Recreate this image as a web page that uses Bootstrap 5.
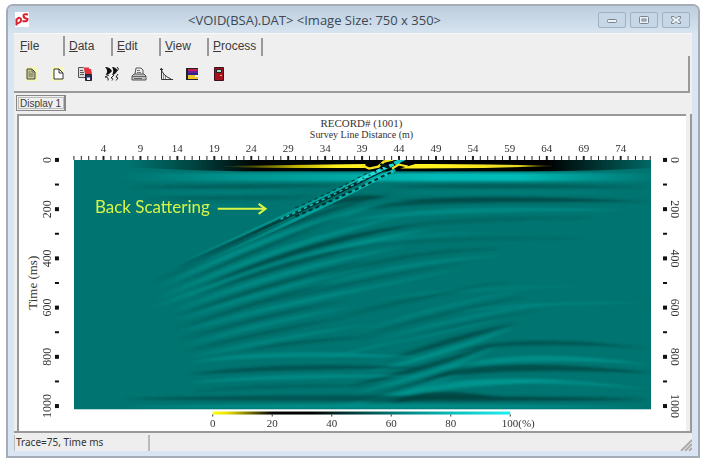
<!DOCTYPE html>
<html lang="en">
<head>
    <meta charset="UTF-8">
    <meta name="viewport" content="width=device-width, initial-scale=1">
    <title>VOID(BSA).DAT</title>
    <link href="https://cdn.jsdelivr.net/npm/bootstrap@5.3.2/dist/css/bootstrap.min.css" rel="stylesheet">
    <style>
        body {
            background-color: #fff;
            color: #333;
            font-family: "Liberation Sans", Arial, sans-serif;
            font-size: 12px;
            line-height: 16px;
            padding: 4px 5px 8px 6px;
        }
        button {
            color: #3a3a3a;
        }
        .app-window {
            background-color: #d9e5f2;
            border: 2px solid #a4acb5;
            border-radius: 7px 7px 0 0;
            padding: 0 6px 5px;
        }
        .title-bar {
            background: linear-gradient(#bccddd, #d7e4f0);
            height: 27px;
            margin: 0 -6px;
            padding: 0 8px 0 7px;
            border-radius: 5px 5px 0 0;
        }
        .title-bar h1 {
            font: 13px/18px "Open Sans", "Noto Sans", sans-serif;
            color: #3d4853;
        }
        .win-btn {
            width: 28px;
            height: 16px;
            border: 1px solid #9eb0c3;
            border-radius: 2px;
            background-color: #c8d7e6;
        }
        .app-body {
            background-color: #efefef;
            border-top: 1px solid #f8f8f8;
        }
        .menu-tabs {
            padding-top: 2px;
        }
        .menu-tab {
            min-width: 48px;
            height: 18px;
            padding: 0 5px 2px 4px;
            border-right: 2px solid #999;
            text-align: left;
        }
        .menu-tab.active {
            min-width: 51px;
            height: 20px;
            padding: 2px 5px 2px 6px;
        }
        .tool-bar {
            height: 37px;
            margin-right: 2px;
            padding-left: 3px;
            border-right: 2px solid #999;
            border-bottom: 2px solid #999;
        }
        .tool-btn {
            width: 27px;
            height: 24px;
        }
        .display-tabs {
            padding: 2px 2px 3px;
        }
        .display-tab {
            border: 1px solid #888;
            border-right-width: 2px;
            outline: 1px solid #bbb;
            outline-offset: -3px;
            padding: 0 3px;
            height: 16px;
            font-size: 10px;
            line-height: 13px;
        }
        .chart-frame {
            border: solid #999;
            border-width: 0 2px 2px 0;
            padding: 0 4px 0 3px;
        }
        .chart-panel {
            background-color: #fff;
            border: solid #999;
            border-width: 2px 0 0 2px;
        }
        .chart-panel text {
            font-family: "Liberation Serif", "Times New Roman", serif;
            fill: #333;
            text-anchor: middle;
        }
        .chart-panel .note {
            font: 17px Lato, "Open Sans", sans-serif;
            fill: #d8f545;
            text-anchor: start;
        }
        .status-bar {
            height: 18px;
            padding-top: 2px;
            background-color: #eee;
            font-family: "Noto Sans", sans-serif;
            font-size: 10px;
        }
        .status-cell {
            width: 136px;
            line-height: 14px;
            padding-left: 1px;
            border: solid #bbb;
            border-width: 0 2px 0 1px;
        }
    </style>
</head>
<body>
<div class="app-window">
    <header class="title-bar d-flex align-items-center justify-content-between">
        <svg width="16" height="16" viewBox="0 0 16 16" role="img" aria-label="pS">
            <rect width="14" height="15" fill="#fff"/>
            <path d="M1.500 13.500V6.500M2 7Q5.500 4.500 6 7.500T2 11.500" fill="none" stroke="#d9202c" stroke-width="2"/>
            <path d="M13 2.500Q8 1.500 8.500 4T12.500 7Q13 10 7.500 9" fill="none" stroke="#d9202c" stroke-width="2"/>
        </svg>
        <h1 class="m-0 text-nowrap">&lt;VOID(BSA).DAT&gt; &lt;Image Size: 750 x 350&gt;</h1>
        <div class="d-flex gap-1">
            <button type="button" class="win-btn p-0 d-flex align-items-center justify-content-center" aria-label="Minimize">
                <svg width="12" height="12" viewBox="0 0 12 12"><rect x="1.500" y="5.500" width="9" height="3" rx="1" fill="#eef3f8" stroke="#77838f"/></svg>
            </button>
            <button type="button" class="win-btn p-0 d-flex align-items-center justify-content-center" aria-label="Maximize">
                <svg width="12" height="12" viewBox="0 0 12 12"><rect x="1.500" y="2.500" width="9" height="7" rx="1" fill="#eef3f8" stroke="#77838f"/><rect x="4" y="5" width="4" height="2" fill="#c8d7e6" stroke="#77838f"/></svg>
            </button>
            <button type="button" class="win-btn p-0 d-flex align-items-center justify-content-center" aria-label="Close">
                <svg width="12" height="12" viewBox="0 0 12 12"><path d="M1.500 2.500H4L6 4.500 8 2.500h2.500v1.500L8.500 6l2 2v1.500H8L6 7.500 4 9.500H1.500V8l2-2-2-2z" fill="#eef3f8" stroke="#77838f"/></svg>
            </button>
        </div>
    </header>

    <main class="app-body">
        <nav class="menu-tabs d-flex align-items-end">
            <button type="button" class="menu-tab active border-top-0 border-bottom-0 border-start-0 bg-transparent"><u>F</u>ile</button>
            <button type="button" class="menu-tab border-top-0 border-bottom-0 border-start-0 bg-transparent"><u>D</u>ata</button>
            <button type="button" class="menu-tab border-top-0 border-bottom-0 border-start-0 bg-transparent"><u>E</u>dit</button>
            <button type="button" class="menu-tab border-top-0 border-bottom-0 border-start-0 bg-transparent"><u>V</u>iew</button>
            <button type="button" class="menu-tab border-top-0 border-bottom-0 border-start-0 bg-transparent"><u>P</u>rocess</button>
        </nav>

        <div class="tool-bar d-flex align-items-center">
            <button type="button" class="tool-btn p-0 border-0 bg-transparent" aria-label="Open">
                <svg width="16" height="16" viewBox="0 0 16 16"><path d="M2 1h12v14H2z" fill="#f4f6b4"/><path d="M4 3h5l3 3v7H4z" fill="#c9cb93" stroke="#444"/><path d="M9 3v3h3M5.500 6h2M5.500 8h5M5.500 10h5" fill="none" stroke="#666"/></svg>
            </button>
            <button type="button" class="tool-btn p-0 border-0 bg-transparent" aria-label="New">
                <svg width="16" height="16" viewBox="0 0 16 16"><path d="M2 1h12v14H2z" fill="#f8f9b6"/><path d="M4 3h5l4 4v6H4z" fill="#fff" stroke="#333"/><path d="M9 3v4h4" fill="none" stroke="#333"/></svg>
            </button>
            <button type="button" class="tool-btn p-0 border-0 bg-transparent" aria-label="Save as">
                <svg width="16" height="16" viewBox="0 0 16 16"><path d="M1.500 1.500h5l2 2v8h-7z" fill="#ddd" stroke="#555"/><path d="M3 4.500h3M3 6.500h4M3 8.500h4" stroke="#555"/><path d="M7 1.500h5V3h2l1 5H9L7.500 6z" fill="#e2313b"/><path d="M8.500 8.500h6v6h-6z" fill="#303060" stroke="#222"/><path d="M10 11.500h3V14h-3z" fill="#eee"/></svg>
            </button>
            <button type="button" class="tool-btn p-0 border-0 bg-transparent" aria-label="Wiggle traces">
                <svg width="16" height="16" viewBox="0 0 16 16"><path d="M1 1q5 0 7 4Q5 9 1.500 9 5 5 1 1zM8 1q4 0 5.500 3.500Q11 9 8 9 10.500 5 8 1z" fill="#111"/><path d="M13 1l1.500 2-1.500 2M5 9l-4 2q4 0 3 3.500M10 9l-3 3q3 0 1 2.500M14 8l-2 3 2 1-2 2.500" fill="none" stroke="#222"/></svg>
            </button>
            <button type="button" class="tool-btn p-0 border-0 bg-transparent" aria-label="Print">
                <svg width="16" height="16" viewBox="0 0 16 16"><path d="M4 8l1-6h5l2 2v4" fill="#eee" stroke="#555"/><path d="M6 4.500h3M6 6.500h4" stroke="#777"/><path d="M3 8h10l2 2v4H1v-4z" fill="#c4c4c4" stroke="#555"/><path d="M1 10.500h14M3 12.500h8" stroke="#666"/></svg>
            </button>
            <button type="button" class="tool-btn p-0 border-0 bg-transparent" aria-label="Spectrum">
                <svg width="16" height="16" viewBox="0 0 16 16"><path d="M3.500 2v11.500H15M2 3.500h3M3 2q1 7 10 11" fill="none" stroke="#333"/><path d="M5.500 8v5M7.500 10v3" stroke="#888"/></svg>
            </button>
            <button type="button" class="tool-btn p-0 border-0 bg-transparent" aria-label="Color scale">
                <svg width="16" height="16" viewBox="0 0 16 16"><path d="M1 2h12v12H1z" fill="#222"/><path d="M3 3h10v2H3z" fill="#c51d4c"/><path d="M3 5h10v2H3z" fill="#6a1a9c"/><path d="M3 7h10v2H3z" fill="#25258c"/><path d="M3 9h7v2H3z" fill="#f0c52c"/><path d="M10 9h3v2h-3z" fill="#eee"/><path d="M3 11h10v2H3z" fill="#f0c52c"/></svg>
            </button>
            <button type="button" class="tool-btn p-0 border-0 bg-transparent" aria-label="Exit">
                <svg width="16" height="16" viewBox="0 0 16 16"><path d="M2.500 1.500h9v13h-9z" fill="#a80f22" stroke="#40101a"/><path d="M4.500 3.500h5v3h-5z" fill="#a5dcd5" stroke="#222"/><path d="M8 9h2v1H8z" fill="#e8c040"/></svg>
            </button>
        </div>

        <div class="display-tabs">
            <button type="button" class="display-tab d-block bg-transparent">Display 1</button>
        </div>

        <div class="chart-frame">
            <div class="chart-panel">
                <svg class="d-block w-100" viewBox="0 0 668 315" role="img" aria-label="Record 1001, time against survey line distance">
                    <defs>
                        <linearGradient id="scaleFill">
                            <stop offset="0" stop-color="#ffff10"/>
                            <stop offset=".05" stop-color="#e8e000"/>
                            <stop offset=".2" stop-color="#000"/>
                            <stop offset=".33" stop-color="#000"/>
                            <stop offset=".6" stop-color="#007470"/>
                            <stop offset=".8" stop-color="#08bcb8"/>
                            <stop offset="1" stop-color="#20f0f0"/>
                        </linearGradient>
                        <linearGradient id="blackBand">
                            <stop offset="0" stop-opacity="0"/>
                            <stop offset=".12" stop-opacity=".4"/>
                            <stop offset=".24" stop-opacity=".95"/>
                            <stop offset=".8" stop-opacity="1"/>
                            <stop offset="1" stop-opacity=".1"/>
                        </linearGradient>
                        <linearGradient id="yellowLeft">
                            <stop offset="0" stop-color="#e8d800" stop-opacity="0"/>
                            <stop offset=".5" stop-color="#e8d800" stop-opacity=".8"/>
                            <stop offset=".8" stop-color="#fff020"/>
                        </linearGradient>
                        <linearGradient id="yellowRight">
                            <stop offset=".3" stop-color="#fff020"/>
                            <stop offset=".75" stop-color="#e8d820"/>
                            <stop offset="1" stop-color="#e8d800" stop-opacity="0"/>
                        </linearGradient>
                        <linearGradient id="cyanBand">
                            <stop offset="0" stop-color="#00b0ab" stop-opacity="0"/>
                            <stop offset=".25" stop-color="#00b0ab" stop-opacity=".6"/>
                            <stop offset=".6" stop-color="#00bcb8"/>
                            <stop offset=".75" stop-color="#00bcb8"/>
                            <stop offset="1" stop-color="#00b0ab" stop-opacity=".1"/>
                        </linearGradient>
                        <linearGradient id="rayDark" gradientUnits="userSpaceOnUse" x1="280" y1="0" x2="860" y2="0">
                            <stop offset="0" stop-color="#002a29" stop-opacity="0"/>
                            <stop offset=".4" stop-color="#002a29" stop-opacity=".6"/>
                            <stop offset="1" stop-color="#001a19"/>
                        </linearGradient>
                        <linearGradient id="rayLight" gradientUnits="userSpaceOnUse" x1="280" y1="0" x2="880" y2="0">
                            <stop offset="0" stop-color="#00a8a2" stop-opacity="0"/>
                            <stop offset=".5" stop-color="#00a8a2" stop-opacity=".7"/>
                            <stop offset="1" stop-color="#10ccc8"/>
                        </linearGradient>
                        <filter id="soft" filterUnits="userSpaceOnUse" x="0" y="0" width="1564" height="750"><feGaussianBlur stdDeviation="10 3"/></filter>
                        <filter id="thin" filterUnits="userSpaceOnUse" x="0" y="0" width="1564" height="750"><feGaussianBlur stdDeviation="2"/></filter>
                    </defs>

                    <text x="343" y="11" font-size="11">RECORD# (1001)</text>
                    <text x="343" y="22" font-size="10">Survey Line Distance (m)</text>
                    <text transform="translate(18 167) rotate(-90)" font-size="13">Time (ms)</text>

                    <svg x="55" y="44" width="578" height="250" viewBox="0 0 1564 750" preserveAspectRatio="none">
                        <rect width="1564" height="750" fill="#007470"/>
                        <g filter="url(#soft)">
                            <rect x="120" y="38" width="1444" height="26" fill="url(#cyanBand)"/>
                            <g id="streaks"></g>
                        </g>
                        <g filter="url(#thin)" fill="none">
                            <path d="M150 0H1564V24Q1400 34 1200 34H450Q300 32 150 22z" fill="url(#blackBand)"/>
                            <path d="M400 18L790 12V24Q600 26 400 21z" fill="url(#yellowLeft)"/>
                            <path d="M885 26L925 12Q1100 11 1310 18Q1100 27 885 26z" fill="url(#yellowRight)"/>
                            <path d="M780 16L800 26 825 20 840 5 866 -2" stroke="#f6e420" stroke-width="7"/>
                            <path d="M290 308Q560 175 800 44" stroke="url(#rayLight)" stroke-width="7"/>
                            <path d="M280 322Q560 187 850 24" stroke="url(#rayDark)" stroke-width="9"/>
                            <path d="M280 336Q580 200 870 30" stroke="url(#rayLight)" stroke-width="9"/>
                            <path d="M560 178Q700 108 850 22" stroke="#18b5b0" stroke-width="5" stroke-dasharray="9 9"/>
                            <path d="M600 170Q740 104 868 32" stroke="#002f2d" stroke-width="6" stroke-dasharray="11 9"/>
                            <path d="M600 144Q720 86 800 36" stroke="#004744" stroke-width="4" stroke-dasharray="10 9"/>
                            <path d="M770 62L835 28 885 4" stroke="#25dcd8" stroke-width="10" stroke-dasharray="13 6"/>
                            <path d="M830 12l24 12M856 10l22 -8" stroke="#021a1a" stroke-width="7"/>
                            <path d="M862 26L880 14 905 20" stroke="#f6e420" stroke-width="6"/>
                            <path d="M868 10L895 -3" stroke="#10c8c6" stroke-width="10"/>
                        </g>
                    </svg>
                    <text class="note" x="76" y="97">Back Scattering</text>
                    <path d="M199 93H246M240 88L247 93 240 98" fill="none" stroke="#d8f545" stroke-width="2"/>

                    <g id="distanceAxis"></g>
                    <g id="timeAxis"></g>

                    <rect x="194" y="296" width="298" height="3" fill="url(#scaleFill)"/>
                    <g id="scaleAxis"></g>
                </svg>
            </div>
        </div>

        <footer class="status-bar d-flex justify-content-between">
            <div class="status-cell text-nowrap">Trace=75, Time ms</div>
            <svg class="align-self-end" width="12" height="12" viewBox="0 0 12 12"><path d="M1 12L12 1M5 12L12 5M9 12L12 9" stroke="#aaa" stroke-width="2"/></svg>
        </footer>
    </main>
</div>
<script src="https://cdn.jsdelivr.net/npm/bootstrap@5.3.2/dist/js/bootstrap.bundle.min.js"></script>
<script>
    const plot = { left: 55, right: 633, top: 44 };

    // wavefronts: x1, y1, bend x, bend y, x2, y2, thickness, strength (negative is dark)
    const wavefronts = [
        [150, 82, 500, 80, 740, 76, 16, -.5], [860, 80, 1100, 76, 1564, 82, 18, -.5],
        [180, 98, 400, 97, 660, 94, 12, .3], [200, 115, 450, 114, 650, 112, 14, -.4],
        [860, 100, 1100, 94, 1500, 100, 14, .3], [780, 150, 950, 104, 1564, 126, 26, -.75],
        [880, 122, 1000, 116, 1500, 122, 14, -.6], [740, 185, 950, 140, 1500, 152, 22, .6],
        [200, 140, 400, 139, 560, 130, 10, .25], [780, 225, 950, 170, 1400, 176, 14, -.35],
        [220, 370, 560, 180, 860, 100, 20, -.75], [650, 145, 740, 108, 850, 112, 24, -.95],
        [220, 388, 560, 208, 840, 130, 22, .85], [280, 375, 560, 235, 740, 160, 18, -.7],
        [210, 425, 560, 250, 900, 165, 22, .75], [310, 402, 600, 248, 920, 196, 24, -.95],
        [200, 450, 600, 275, 980, 205, 24, .85], [320, 412, 560, 302, 860, 242, 22, -.85],
        [260, 460, 560, 325, 900, 260, 20, .7], [280, 470, 520, 372, 800, 300, 16, -.65],
        [270, 485, 520, 392, 800, 320, 18, .6], [280, 510, 480, 428, 700, 370, 14, -.6],
        [280, 520, 500, 448, 800, 380, 16, .6], [290, 540, 500, 470, 740, 420, 14, -.5],
        [290, 562, 500, 490, 760, 440, 16, .55], [300, 575, 480, 525, 740, 470, 14, -.5],
        [310, 595, 500, 545, 820, 490, 16, .5], [460, 575, 560, 548, 820, 530, 14, -.5],
        [700, 290, 850, 215, 1150, 220, 14, .4], [760, 265, 900, 232, 1400, 236, 10, -.3],
        [640, 365, 860, 275, 1160, 265, 14, -.45], [640, 385, 880, 305, 1180, 285, 16, .5],
        [500, 435, 760, 365, 1080, 300, 12, -.4], [520, 455, 760, 390, 1060, 325, 14, .45],
        [820, 420, 1000, 385, 1400, 380, 14, .3], [700, 480, 880, 420, 1180, 365, 12, -.45],
        [760, 520, 980, 440, 1220, 390, 14, .45], [780, 530, 980, 462, 1220, 410, 12, -.5],
        [800, 550, 1020, 472, 1300, 430, 14, .5], [780, 580, 1000, 500, 1260, 450, 12, -.4],
        [1000, 460, 1250, 425, 1560, 430, 14, .4], [660, 600, 900, 540, 1190, 470, 14, .5],
        [850, 602, 1020, 540, 1200, 490, 22, -.85], [800, 638, 1010, 580, 1200, 500, 20, .85],
        [1020, 580, 1180, 528, 1550, 565, 20, -.65], [980, 635, 1180, 570, 1564, 615, 26, .7],
        [310, 610, 520, 570, 960, 595, 22, .6], [310, 645, 540, 615, 960, 625, 22, -.7],
        [740, 680, 960, 628, 1150, 550, 22, -.85], [760, 700, 980, 645, 1150, 560, 18, .8],
        [940, 665, 1100, 600, 1564, 640, 28, -.85], [300, 670, 560, 645, 960, 650, 20, .6],
        [800, 710, 980, 660, 1100, 600, 14, -.6], [820, 725, 980, 662, 1340, 665, 24, .85],
        [960, 675, 1200, 645, 1564, 690, 22, .6], [320, 695, 560, 672, 860, 680, 12, -.4],
        [700, 745, 920, 700, 1060, 635, 14, .7], [860, 735, 930, 690, 1160, 714, 28, -.95],
        [140, 718, 700, 712, 1564, 722, 26, -.7], [850, 718, 1100, 714, 1564, 716, 14, -.6],
        [130, 742, 700, 738, 1564, 742, 20, .7]
    ];
    document.getElementById('streaks').innerHTML = wavefronts.map(([x1, y1, cx, cy, x2, y2, w, k]) =>
        `<path d="M${x1} ${y1}Q${cx} ${cy - w * .7} ${x2} ${y2}Q${cx} ${cy + w * .7} ${x1} ${y1}" fill="${k < 0 ? '#003f3d' : '#00a09a'}" opacity="${Math.abs(k) * .8}"/>`
    ).join('');

    // one tick per metre, labelled every five
    let marks = '';
    for (let m = 0; m <= 78; m++) {
        const x = plot.left + m * 7.4;
        const major = m % 5 === 4;
        marks += `<path d="M${x} ${plot.top - 4}V${plot.top}" stroke="#222" stroke-width="${major ? 2 : 1}"/>`;
        if (major) {
            marks += `<text x="${x}" y="36" font-size="11">${m}</text>`;
        }
    }
    document.getElementById('distanceAxis').innerHTML = marks;

    // time runs down both sides, labels face outward
    marks = '';
    for (let t = 0; t <= 1000; t += 100) {
        const y = plot.top + t * 0.2465;
        const major = t % 200 === 0;
        const size = major ? 4 : 2;
        for (const x of [38, 647]) {
            marks += `<rect x="${x - 2}" y="${y - size / 2}" width="4" height="${size}" fill="#111"/>`;
        }
        if (major) {
            marks += `<text transform="translate(32 ${y}) rotate(-90)" font-size="12">${t}</text>`;
            marks += `<text transform="translate(653 ${y}) rotate(90)" font-size="12">${t}</text>`;
        }
    }
    document.getElementById('timeAxis').innerHTML = marks;

    marks = '';
    for (let p = 0; p <= 100; p += 20) {
        const x = 194 + p * 2.98;
        marks += `<path d="M${x} 299v2" stroke="#333"/>`;
        marks += p < 100
            ? `<text x="${x}" y="311" font-size="11">${p}</text>`
            : `<text x="${x + 8}" y="311" font-size="11">${p}(%)</text>`;
    }
    document.getElementById('scaleAxis').innerHTML = marks;
</script>
</body>
</html>
